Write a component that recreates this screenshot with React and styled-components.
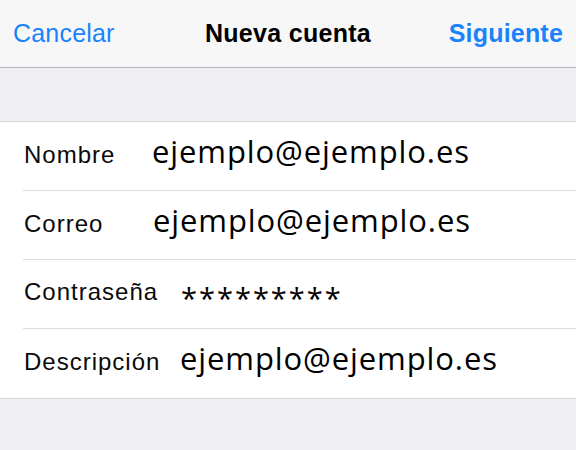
import React from 'react';
import styled, { createGlobalStyle } from 'styled-components';

const GlobalStyle = createGlobalStyle`
  html, body {
    margin: 0;
    padding: 0;
    background: #efeff4;
  }
  * {
    box-sizing: border-box;
  }
`;

const Screen = styled.div`
  width: 576px;
  height: 450px;
  background: #efeff4;
  overflow: hidden;
`;

const NavBar = styled.div`
  height: 68px;
  padding: 0 13px;
  display: flex;
  align-items: center;
  justify-content: space-between;
  background: #f7f7f8;
  border-bottom: 1px solid #b4b4b8;
  font-family: "Liberation Sans", Arial, sans-serif;
  font-size: 25px;
`;

const NavButton = styled.span`
  color: #1a82fb;
  font-weight: ${(p) => (p.$strong ? 700 : 400)};
  letter-spacing: 0.2px;
  min-width: 115px;
  text-align: ${(p) => (p.$right ? 'right' : 'left')};
`;

const Title = styled.span`
  color: #000;
  font-weight: 700;
  letter-spacing: 0.3px;
`;

const Band = styled.div`
  height: 54px;
  border-bottom: 1px solid #d3d3d8;
`;

const List = styled.div`
  background: #fff;
  border-bottom: 1px solid #d3d3d8;
`;

const Row = styled.div`
  height: 69px;
  margin-left: 23px;
  padding-top: 14px;
  display: flex;
  align-items: baseline;
  border-bottom: ${(p) => (p.$last ? 'none' : '1px solid #dcdce0')};
`;

const Label = styled.span`
  flex: 0 0 ${(p) => p.$width}px;
  padding-left: 1px;
  font-family: "Liberation Sans", Arial, sans-serif;
  font-size: 24px;
  line-height: 1;
  letter-spacing: 1px;
  color: #0a0a0a;
`;

const Value = styled.span`
  font-family: "Open Sans", "Noto Sans", sans-serif;
  font-size: 31px;
  line-height: 1;
  letter-spacing: 0.9px;
  color: #000;
`;

const Masked = styled(Value)`
  font-size: 29px;
  letter-spacing: 2px;
  transform: translateY(${(p) => p.$drop}px);
`;

const fields = [
  { label: 'Nombre', value: 'ejemplo@ejemplo.es', at: 152 },
  { label: 'Correo', value: 'ejemplo@ejemplo.es', at: 153 },
  { label: 'Contraseña', value: '*********', at: 181, secret: true },
  { label: 'Descripción', value: 'ejemplo@ejemplo.es', at: 180 },
];

export default function App() {
  return (
    <Screen>
      <GlobalStyle />
      <NavBar>
        <NavButton>Cancelar</NavButton>
        <Title>Nueva cuenta</Title>
        <NavButton $strong $right>Siguiente</NavButton>
      </NavBar>
      <Band />
      <List>
        {fields.map((f, i) => (
          <Row key={f.label} $last={i === fields.length - 1}>
            <Label $width={f.at - 23}>{f.label}</Label>
            {f.secret ? (
              <Masked $drop={9}>{f.value}</Masked>
            ) : (
              <Value>{f.value}</Value>
            )}
          </Row>
        ))}
      </List>
    </Screen>
  );
}
